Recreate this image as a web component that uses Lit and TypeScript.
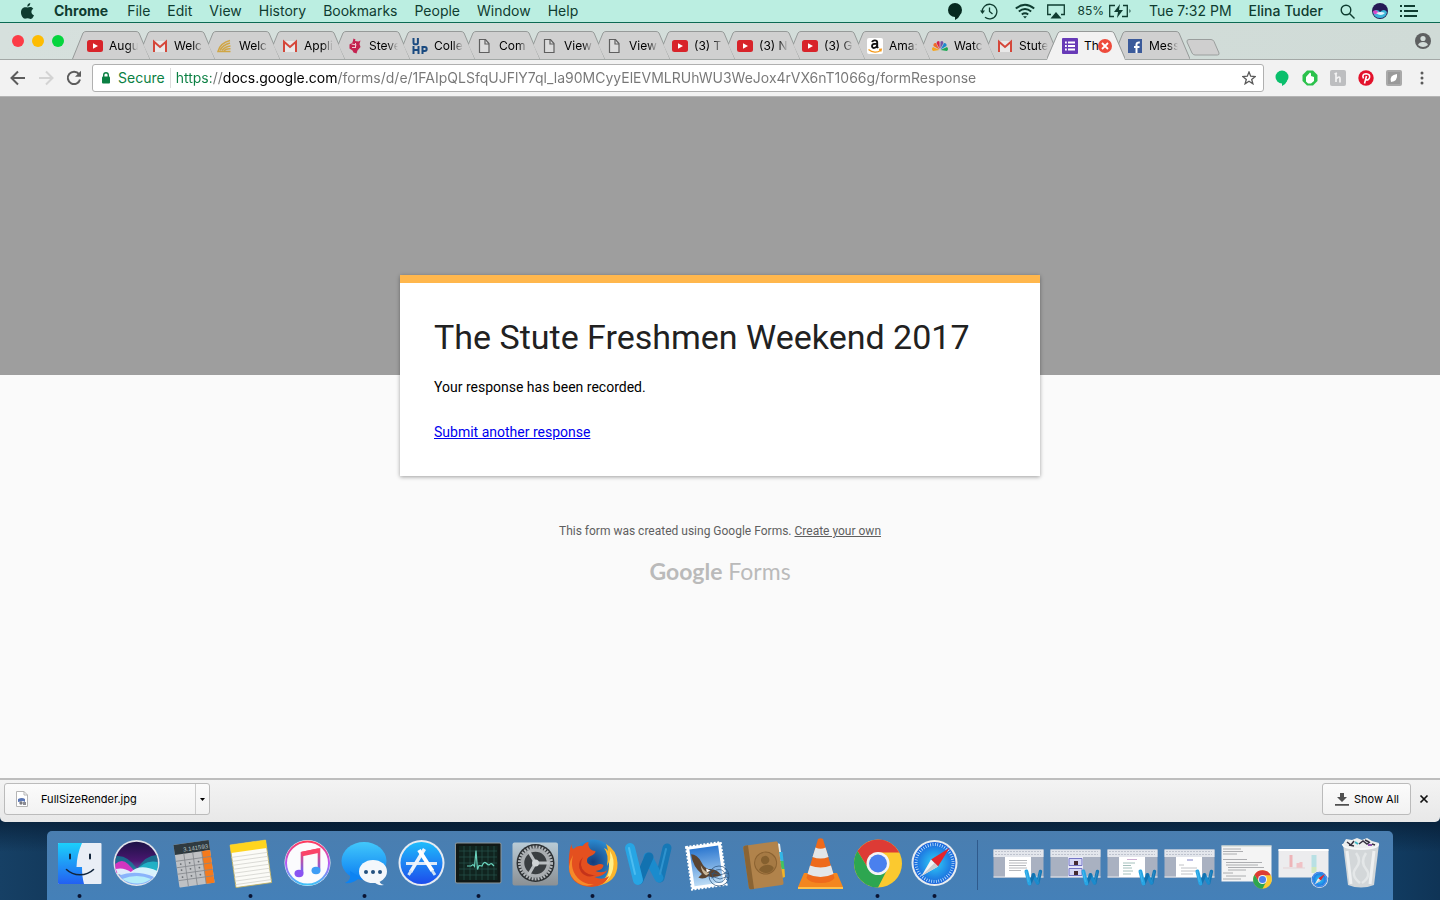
import { LitElement, html, css, svg, nothing } from "lit";
import { customElement } from "lit/decorators.js";
import { classMap } from "lit/directives/class-map.js";

const menus = ["File", "Edit", "View", "History", "Bookmarks", "People", "Window", "Help"];

const address =
  "https://docs.google.com/forms/d/e/1FAIpQLSfqUJFlY7ql_la90MCyyElEVMLRUhWU3WeJox4rVX6nT1066g/formResponse";

const favicons: Record<string, unknown> = {
  youtube: svg`<rect x="0" y="2" width="16" height="12" rx="2.5" fill="#d8232a"/><path d="M6 5.2v5.6L11 8z" fill="#fff"/>`,
  gmail: svg`<path d="M1.500 3h13v11h-13z" fill="#e8e8e8"/><path d="M2 14V3.800L8 9l6-5.200V14" fill="none" stroke="#d5473a" stroke-width="2"/>`,
  wing: svg`<path d="M13 2.500Q3 5 1 13.500h12.500" fill="none" stroke="#d0a646" stroke-width="1.500"/><path d="M13 5Q5.500 7 3 12.500M13.500 8Q8 8.500 5 12.500M13.500 10.800Q9 10.500 7 12.800" fill="none" stroke="#d0a646" stroke-width="1.600"/>`,
  stevens: svg`<g fill="#c42250"><path d="M6.500.5l2 1-.5 1.500 3.500.5 2-1-1 3.500 1 3-3 3.500-1 3-3-1-1-2-3-2 0-4 3-2z"/></g><path d="M4.500 6l5 1M5 9.500h4M8.500 5v5" stroke="#efc7d3" stroke-width="1"/>`,
  uhp: svg`<path d="M1.500 0v5q0 1.200 1.200 1.200h2q1.200 0 1.200-1.200V0M1.500 8v8M6.500 8v8M1.500 12h5M10.500 16V9h2.200a2 2 0 0 1 0 4h-2.200" fill="none" stroke="#1a4a80" stroke-width="2"/>`,
  page: svg`<path d="M2.500 1.500h6l3.500 4v9H2.500z" fill="#dcdcdc" stroke="#5f5f5f" stroke-width="1.200"/><path d="M8 1.500V6h4" fill="none" stroke="#5f5f5f" stroke-width="1.200"/>`,
  amazon: svg`<rect width="16" height="16" rx="2" fill="#fff"/><path d="M5.200 4.200C5.600 1.900 10.200 1.600 10.200 4.500v4c0 .8.500 1 .9 1.500M10 5.600C6.500 5.500 5 6.300 5 8.100c0 2.600 4.300 2.400 5.100-.4" fill="none" stroke="#111" stroke-width="1.900"/><path d="M1.500 11.500c4 3.300 9 3.200 12 .9M12 11.500l2.300-.2-.6 2.200" fill="none" stroke="#f59a1b" stroke-width="1.300"/>`,
  nbc: svg`<path d="M7.500 12L1 13q-2-2 0-4z" fill="#f6a51c"/><path d="M7.300 11.500L1.500 8Q1 4.500 4 5z" fill="#ef6a2a"/><path d="M7.700 11L4.500 5Q5.500 2 7.500 3.600z" fill="#d4234a"/><path d="M8.300 11L8.500 3.600Q11 2 11.500 5z" fill="#7354a5"/><path d="M8.700 11.500L12 5q3 0 2.500 3z" fill="#1d88cc"/><path d="M8.500 12L15 9q2 2 0 4z" fill="#1ca853"/>`,
  forms: svg`<rect width="16" height="16" rx="1" fill="#673ab7"/><path d="M3 4.500h1.800M3 8h1.800M3 11.500h1.800M6 4.500h7M6 8h7M6 11.500h7" stroke="#fff" stroke-width="1.800"/>`,
  facebook: svg`<rect x="1" y="1" width="14" height="14" fill="#3b5a9a"/><path d="M9.500 15V6.500q0-2.300 3.300-1.900M7 9h5.500" fill="none" stroke="#fff" stroke-width="2"/>`,
};

const tabs: { icon: string; label: string; active?: boolean }[] = [
  { icon: "youtube", label: "Augu" },
  { icon: "gmail", label: "Welc" },
  { icon: "wing", label: "Welc" },
  { icon: "gmail", label: "Appli" },
  { icon: "stevens", label: "Steve" },
  { icon: "uhp", label: "Colle" },
  { icon: "page", label: "Com" },
  { icon: "page", label: "View" },
  { icon: "page", label: "View" },
  { icon: "youtube", label: "(3) T" },
  { icon: "youtube", label: "(3) N" },
  { icon: "youtube", label: "(3) G" },
  { icon: "amazon", label: "Ama:" },
  { icon: "nbc", label: "Watc" },
  { icon: "gmail", label: "Stute" },
  { icon: "forms", label: "Th", active: true },
  { icon: "facebook", label: "Mess" },
];

const chromeMark = svg`
  <circle r="24" fill="#fbc92f"/>
  <path d="M0 0V-11H21.300A24 24 0 0 0-20.500-12.500L-9.500 5.500z" fill="#dd3b35"/>
  <path d="M-20.500-12.500L-9.500 5.500 0 11 9.500 5.500 0 24A24 24 0 0 1-20.500-12.500z" fill="#2da650"/>
  <circle r="11.500" fill="#f4f4f4"/><circle r="9" fill="#4a80ee"/>`;

const safariMark = svg`
  <circle r="23" fill="#e9edf0"/><circle r="21" fill="url(#safari)"/>
  <circle r="18.500" fill="none" stroke="#d5efff" stroke-width="3" stroke-dasharray=".7 1.720"/>
  <path d="M15-15L-3.500-3.500 3.500 3.500z" fill="#e4252c"/><path d="M-13 13L-3.500-3.500 3.500 3.500z" fill="#f3f3f3"/><path d="M-13 13L3.500 3.500 0 0z" fill="#c8ccd0"/>`;

const wordMark = svg`
  <g fill="none" stroke-linecap="round" stroke-linejoin="round">
    <path d="M46 17L39 47" stroke="#1678b6" stroke-width="9"/>
    <path d="M27 26L38 47" stroke="#1a8bcd" stroke-width="9"/>
    <path d="M28 26L18 49" stroke="#1272b0" stroke-width="9"/>
    <path d="M9 17L17 49" stroke="#27a5e4" stroke-width="10"/>
    <path d="M8 17L14 43" stroke="#4cbcf0" stroke-width="2"/>
    <path d="M45 18L39 43" stroke="#2f93ce" stroke-width="2"/>
  </g>`;

const apps: { name: string; running?: boolean; art: unknown }[] = [
  {
    name: "Finder", running: true,
    art: svg`<rect x="7" y="12" width="43.500" height="41" rx="1" fill="#e9eef6"/><path d="M8 12H31Q26 23 25.500 36H31Q31 46 33 53H8q-1 0-1-1V13q0-1 1-1z" fill="url(#finder)"/>
      <path d="M19 23.500v4M39 23.500v4" stroke="#12263d" stroke-width="2" stroke-linecap="round"/><path d="M15.500 38.500c7 7 20 7 27 0" fill="none" stroke="#12263d" stroke-width="1.600" stroke-linecap="round"/>`,
  },
  {
    name: "Siri",
    art: svg`<circle cx="28.500" cy="32" r="23" fill="#dfe3ea"/><circle cx="28.500" cy="32" r="21.300" fill="url(#siri)"/>
      <path d="M8.500 25Q20 24 29 38 38 24 48.500 24 51 32 48.500 40L9 40Q6 32 8.500 25z" fill="#0a8f9c" opacity=".7"/>
      <path d="M7.300 33Q14 27 20 33 25 38 28 42L8.500 42Q7 38 7.300 33z" fill="#e52fc4" opacity=".9"/>
      <path d="M26 42Q36 28 49.700 31 50 39 47.500 43z" fill="#22c5d6" opacity=".75"/>
      <path d="M7.800 38q8-2 15 3 9-9 26.500-1-1 4-3 6.500-12-5-23-3-8 2-13.500-.5z" fill="#dff6ff" opacity=".95"/>
      <path d="M11 44.500q17-6 35 1.500-5 5-9 6.300-9 2.500-17-.5-6-3-9-7.300z" fill="#8ab4fb"/><path d="M14 48q15-6 29 0-13 9-29 0z" fill="#b8f3fa" opacity=".9"/>`,
  },
  {
    name: "Calculator",
    art: svg`<g transform="translate(8.500 14) rotate(-8)"><rect width="35.500" height="43" rx="1" fill="#bfc1c4"/><rect width="35.500" height="10" fill="#2f3a40"/>
      <rect x="27" y="10" width="8.500" height="33" fill="#f57a1c"/><path d="M0 16.500h35.500M0 23h35.500M0 29.500h35.500M0 36h35.500M9 10v33M18 10v33M27 10v33" stroke="#84888c" stroke-width=".8"/>
      <g fill="#6c7074"><circle cx="4.500" cy="20" r=".9"/><circle cx="13.500" cy="20" r=".9"/><circle cx="22.500" cy="20" r=".9"/><circle cx="4.500" cy="26" r=".9"/><circle cx="13.500" cy="26" r=".9"/><circle cx="22.500" cy="26" r=".9"/><circle cx="4.500" cy="33" r=".9"/><circle cx="13.500" cy="33" r=".9"/><circle cx="22.500" cy="33" r=".9"/></g>
      <text x="34" y="8" text-anchor="end" font-size="6" fill="#b7c4c6">3.141593</text></g>`,
  },
  {
    name: "Notes", running: true,
    art: svg`<g transform="translate(8 14) rotate(-8)"><rect width="36" height="43" fill="#fbfbf7" stroke="#c5b25c" stroke-width=".8"/><rect width="36" height="8" fill="#ffd51e"/>
      <path d="M0 12.500h36M0 16.500h36M0 20.500h36M0 24.500h36M0 28.500h36M0 32.500h36M0 36.500h36M0 40h36" stroke="#d5d5d0" stroke-width=".8"/></g>`,
  },
  {
    name: "iTunes",
    art: svg`<circle cx="28.500" cy="32" r="23" fill="#f4f4f8"/><circle cx="28.500" cy="32" r="21.500" fill="#fbfbfd" stroke="url(#tunes)" stroke-width="2"/>
      <path d="M23 42V22l17-3.500v20" fill="none" stroke="url(#note)" stroke-width="2.600"/><path d="M23 23l17-3.500" stroke="#fb4468" stroke-width="4.500"/><ellipse cx="20" cy="42.500" rx="4.500" ry="3.700" fill="#8a53f2"/><ellipse cx="37" cy="39.500" rx="4.500" ry="3.700" fill="#3f9df5"/>`,
  },
  {
    name: "Messages", running: true,
    art: svg`<ellipse cx="28" cy="30" rx="22.500" ry="19" fill="url(#sky)"/><path d="M14 40q2 9-5 12 9 1 15-6z" fill="#0d83f2"/>
      <ellipse cx="37" cy="40.500" rx="14" ry="11.500" fill="#f4f7fb"/><path d="M43 48q0 5 5 6-7 1-11-4z" fill="#f4f7fb"/><circle cx="30" cy="41" r="2" fill="#24517f"/><circle cx="37" cy="41" r="2" fill="#24517f"/><circle cx="44" cy="41" r="2" fill="#24517f"/>`,
  },
  {
    name: "App Store",
    art: svg`<circle cx="28.500" cy="32" r="23" fill="#e6ebf2"/><circle cx="28.500" cy="32" r="21" fill="url(#store)"/>
      <path d="M13 32.500h31" stroke="#dfeaf8" stroke-width="3"/><path d="M31.500 18L17.500 41" stroke="#eef4fb" stroke-width="3.500"/><path d="M26 19l13.500 21" stroke="#fff" stroke-width="4"/><path d="M18.500 39.500l-3 4.500M39 39.500l3 4.500" stroke="#cfe2f5" stroke-width="3"/>`,
  },
  {
    name: "Activity Monitor", running: true,
    art: svg`<rect x="5" y="11.500" width="46.500" height="41" rx="2" fill="#8e9699"/><rect x="6" y="12.500" width="44.500" height="39" rx="1" fill="#101816"/><rect x="9" y="15" width="38.500" height="34" fill="#10241f"/>
      <path d="M9 20h38M9 26h38M9 32h38M9 38h38M9 44h38M14 15v34M20 15v34M26 15v34M32 15v34M38 15v34M44 15v34" stroke="#25544a" stroke-width=".7"/>
      <path d="M17 35h4l2-1.500 1.500 2 1.500-16 1.500 19 1.500-4 3 .5q2-5 4-3t3 2q2-2 3-1l2 2" fill="none" stroke="#69d3bd" stroke-width="1.200"/>`,
  },
  {
    name: "System Preferences",
    art: svg`<rect x="5.500" y="11.500" width="45.500" height="43" rx="2" fill="url(#metal)"/><circle cx="28.500" cy="32" r="19" fill="#2c3033"/><circle cx="28.500" cy="32" r="16" fill="#4a4f52" stroke="#b3b7ba" stroke-width="3" stroke-dasharray="1.800 1.200"/>
      <circle cx="28.500" cy="32" r="13" fill="#3a3e41" stroke="#a9adb0" stroke-width="3.500"/><path d="M28.500 32h14M28.500 32l-7-12M28.500 32l-7 12" stroke="#b9bdc0" stroke-width="3"/><circle cx="28.500" cy="32" r="3.500" fill="#d0d3d5"/>`,
  },
  {
    name: "Firefox", running: true,
    art: svg`<circle cx="29" cy="31" r="22.500" fill="url(#globe)"/>
      <path d="M42 13q11 6 11.500 19 .5 20-21.500 23 14-8 13-24l-2 4q2-12-3-18 3 1 4 3-.5-4-2-7z" fill="#fbb62c"/><path d="M46 20q5 8 3 18-2 9-8 13 5-9 4-18 2-6 1-13z" fill="#fff08a"/>
      <path d="M7.500 13q0 4 2 5 4-4 9-3 3-4 6-4-1 3 1 6 2 3 6 3 0 3-5 5-5 2-3 7 4 4 9 2 4-2 7 0 0 5-8 6 7 3 12-1-4 7-13 7 8 4 15-1-6 11-18 11Q7 55 5 38 4 22 7.500 13z" fill="#e4501f"/>
      <path d="M9 24Q5 40 16 49q6 5 14 4-8 4-16-1Q5 46 5 36q1-7 4-12z" fill="#f58a2a"/><path d="M19 26q-5 9 2 15 5 4 11 3-9 4-15-3-5-8 2-15z" fill="#c5331a"/>`,
  },
  { name: "Microsoft Word", running: true, art: wordMark },
  {
    name: "Mail",
    art: svg`<g transform="translate(8 16) rotate(-8)"><rect width="35" height="43" fill="#fff" stroke="#fff" stroke-width="2" stroke-dasharray="2 1.500"/><rect x="3" y="3" width="29" height="37" fill="url(#stamp)"/>
      <path d="M4 8q6 1 9 9 2 6 6 8 8 0 12 8-7 2-13-1-5 3-10 0l4-3Q4 21 4 8z" fill="#5a4330"/><path d="M12 20q3 8 8 9l-4 2q-4-3-4-11z" fill="#c9b698"/><path d="M17 24l4 3-4 1z" fill="#fff"/></g><circle cx="41" cy="45" r="10" fill="none" stroke="#2e557f" stroke-width="1" opacity=".75"/><circle cx="41" cy="45" r="6.500" fill="none" stroke="#2e557f" opacity=".7"/><path d="M33 43q3-2 6 0t6 0 6 0M33 47q3-2 6 0t6 0 6 0" fill="none" stroke="#2e557f" opacity=".7"/>`,
  },
  {
    name: "Contacts",
    art: svg`<path d="M42 12l3 1 4 32-4 2z" fill="#e8eef0"/><path d="M44 21l3.500 0 1 9-3 1z" fill="#33b7e6"/><path d="M45 30l3.500 0 1 8-3 1z" fill="#41c463"/><path d="M46 38l3.500 0 .5 8-3 1z" fill="#f2b327"/>
      <g transform="translate(8 15) rotate(-8)"><rect width="35" height="44" rx="2" fill="#b1834b"/><path d="M2 0h3v44H2q-2 0-2-2V2q0-2 2-2z" fill="#8a6434"/><circle cx="20" cy="20" r="11" fill="#a67a44" stroke="#8b6231"/><circle cx="20" cy="17" r="4.200" fill="#85602f"/><path d="M12.500 26q2-4 7.500-4t7.500 4q-3 4-7.500 4t-7.500-4z" fill="#85602f"/></g>`,
  },
  {
    name: "VLC",
    art: svg`<path d="M12 42h33l6 14v2H6v-2z" fill="#f3861f"/><path d="M6 56h45v2H6z" fill="#ffc04a"/><path d="M26 8q2.500-1.500 5 0l11.500 39q-3 5-14 5t-14-5z" fill="#ee6a1b"/>
      <path d="M23.500 16.500q5 2.500 10 0l3 9.500q-8 3-16 0zM18 34.500q10.500 4 21 0l2.500 8.500q-13 6-26 0z" fill="#e3e6e8"/>`,
  },
  { name: "Chrome", running: true, art: svg`<g transform="translate(29 32.500)">${chromeMark}</g>` },
  { name: "Safari", running: true, art: svg`<g transform="translate(28.500 32)">${safariMark}</g>` },
];

const wordBadge = svg`<g transform="translate(33 34) scale(.38)">${wordMark}</g>`;
const wordWindow = svg`<rect x="3.500" y="18.500" width="50" height="28" fill="#a9b1c1"/><rect x="3.500" y="18.500" width="50" height="7.500" fill="#e3e6ec"/><path d="M5 20.500h46M5 23.500h46" stroke="#b5bac6" stroke-dasharray="2 1" stroke-width=".8"/><path d="M3.500 46h50" stroke="#e8e8ec"/>`;
const windows: { name: string; art: unknown }[] = [
  { name: "Document one", art: svg`${wordWindow}<rect x="15" y="26" width="26" height="20" fill="#fff"/><path d="M19 29.500h18M19 32h18M19 34.500h17M19 37h18M19 39.500h12" stroke="#a5a7ac" stroke-width=".8"/>${wordBadge}` },
  { name: "Document two", art: svg`${wordWindow}<rect x="21" y="26" width="15" height="20" fill="#e6e8f8"/><path d="M22 27.500h13v7H22zM22 37.500h13v7H22z" fill="#d5d7f4" stroke="#7476c4"/><path d="M27 30h4v4h-4zM27 40h4v4h-4z" fill="#452b32"/>${wordBadge}` },
  { name: "Document three", art: svg`${wordWindow}<rect x="15" y="26" width="26" height="20" fill="#fff"/><path d="M23 28.500h10" stroke="#c09ac8" stroke-width=".8"/><path d="M19 32h12M19 34.500h8M19 37h9M19 40h10M19 43h8" stroke="#8db0ab" stroke-width=".8"/>${wordBadge}` },
  { name: "Document four", art: svg`${wordWindow}<rect x="15" y="26" width="26" height="20" fill="#fff"/><path d="M26 29h6" stroke="#a9aad8" stroke-width="1.500"/><path d="M18 34h5M20 37h16M20 40h17M20 43h12" stroke="#b0b2b8" stroke-width=".8"/>${wordBadge}` },
  { name: "Notes page", art: svg`<rect x="3.500" y="14.500" width="50" height="36" fill="#f4f4f4"/><path d="M3.500 15h50" stroke="#c6cfc6"/><path d="M5 18h18M5 20.500h20M5 23h14M5 28.500h24M8 31.500h36M8 34h32M10 36.500h36M10 39h18M5 42h10M8 45h20M5 48h18" stroke="#9a9c9f" stroke-width=".8"/><g transform="translate(44.500 48.500) scale(.39)">${chromeMark}</g>` },
  { name: "Chart page", art: svg`<rect x="3.500" y="18.500" width="50" height="28" fill="#ececee"/><path d="M3.500 19h50" stroke="#fff" stroke-width="2"/><path d="M16 24v12" stroke="#eeb4b8" stroke-width="3"/><path d="M23 32v5M26 31v6" stroke="#f0c2c6" stroke-width="3"/><path d="M8 37h22" stroke="#e5d3d5"/><path d="M39 24v12" stroke="#b8e0e4" stroke-width="5"/><path d="M39 36v6" stroke="#cfe8bd" stroke-width="5"/><g transform="translate(44.500 48.500) scale(.37)">${safariMark}</g>` },
];

const trashArt = svg`
  <path d="M11 13h36l-5 41q-13 5-26 0z" fill="#d3d7d9"/><path d="M15 20l4 33M42 20l-4 33" stroke="#eef0f1" fill="none" stroke-width="3"/><path d="M24 22q6 8 0 15t4 15M34 22q-6 9 0 16t-4 14" stroke="#e4e7e8" fill="none" stroke-width="2.500"/>
  <path d="M11 13l3-5 6 1 5-2 5 2 5-2 5 3 7 2-1 4-17 3-17-3z" fill="#eceeee"/><path d="M15 11l4 3 3-4M27 13l4-3 4 3 3-2M33 9l4 2M17 14l5 1M40 13l3 1" fill="none" stroke="#353240" stroke-width="1.500"/><path d="M23 11l3 2" stroke="#3fb9c6" stroke-width="2"/><path d="M36 14l4 0" stroke="#8a4fa8" stroke-width="2"/>
  <path d="M10.500 13q1 5 18 5t18-5" fill="none" stroke="#f6f7f8" stroke-width="1.500"/>`;

@customElement("mac-menu-bar")
export class MacMenuBar extends LitElement {
  static styles = css`
    :host { display: block; }
    .bar { display: flex; align-items: center; justify-content: space-between; height: 22px; padding: 0 22px 0 20px; background: #bbeee1; border-bottom: 1px solid #0c6a53; color: #0f3c30; font: 14px/22px Inter, sans-serif; }
    .side { display: flex; align-items: center; gap: 17px; }
    .tight { display: flex; align-items: center; gap: 12px; }
    .side svg { display: block; }
    .item { border: 0; padding: 0; background: none; color: inherit; font: inherit; }
    .app { font-weight: 700; margin-right: 2px; }
    .logo { margin-right: 2px; }
    .battery { display: flex; align-items: center; gap: 4px; font-size: 12px; }
    .text { font-weight: 500; }
  `;
  render() {
    return html`
      <header class="bar">
        <nav class="side">
          <svg class="logo" width="15" height="18" viewBox="0 0 15 18"><path d="M10.300 1q0 3-3 3.700Q7 1.900 10.300 1zM7.500 5.600C9 5 11.500 4.300 13.300 6.700 10.500 8.500 11 12 14 13.200 12.500 17 11 17.300 9 16.600q-1.500-.5-3 0C3.500 17.500 1 14 1 10.500 1 6 4.500 4.300 7.500 5.600z" fill="#0f3c30"/></svg>
          <button class="item app">Chrome</button>
          ${menus.map((m) => html`<button class="item">${m}</button>`)}
        </nav>
        <div class="side">
          <svg width="16" height="18" viewBox="0 0 16 18"><circle cx="8" cy="8" r="7" fill="#06291f"/><path d="M8 14v4q4-2 5-5z" fill="#06291f"/></svg>
          <svg width="18" height="17" viewBox="0 0 18 17" fill="none" stroke="#0f3c30" stroke-width="1.300"><path d="M2.300 9.500A7.300 7.300 0 1 1 5 14.300"/><path d="M9.500 4.500v4l3 2.500"/><path d="M0 7.500h5L2.500 11z" fill="#0f3c30" stroke="none"/></svg>
          <div class="tight">
            <svg width="20" height="16" viewBox="0 0 20 16" fill="none" stroke="#0f3c30" stroke-width="1.900"><path d="M.8 5.500Q10-2 19.200 5.500M3.800 8.500q6.200-5 12.400 0M6.800 11.500q3.200-2.500 6.400 0"/><path d="M8 13.300h4L10 15.500z" fill="#0f3c30" stroke="none"/></svg>
            <svg width="18" height="15" viewBox="0 0 18 15"><path d="M4 10.500H.7V1h16.600v9.500H14" fill="none" stroke="#0f3c30" stroke-width="1.300"/><path d="M3.500 14.500L9 8l5.500 6.500z" fill="#0f3c30"/></svg>
            <span class="battery">85%
              <svg width="24" height="14" viewBox="0 0 24 14"><path d="M7 1.500H1.700v11H6M15 1.500h4.300v11H14" fill="none" stroke="#0f3c30" stroke-width="1.300"/><path d="M12 0L6 8h4l-1 6 6-8h-4z" fill="#0f3c30"/><path d="M21.500 5q2 2 0 4z" fill="#0f3c30"/></svg>
            </span>
          </div>
          <span class="item">Tue 7:32 PM</span>
          <span class="item text">Elina Tuder</span>
          <svg width="15" height="15" viewBox="0 0 15 15" fill="none" stroke="#0f3c30" stroke-width="1.400"><circle cx="6" cy="6" r="4.800"/><path d="M9.500 9.500l5 5"/></svg>
          <div class="tight">
            <svg width="16" height="16" viewBox="0 0 16 16"><circle cx="8" cy="8" r="8" fill="#251a56"/><path d="M1 9q4-4 7 0 4-4 7 0-1 6-7 6T1 9z" fill="#3bb6d8"/><path d="M1 8q4-2 6 2-3 2-5 1z" fill="#d846c8"/><path d="M4 10q5-2 9 0-4 4-9 0z" fill="#e3f5ff"/></svg>
            <svg width="18" height="12" viewBox="0 0 18 12" stroke="#0f3c30" stroke-width="1.800"><path d="M0 1h2M0 6h2M0 11h2M4 1h11M4 6h14M4 11h13"/></svg>
          </div>
        </div>
      </header>`;
  }
}

@customElement("browser-tabs")
export class BrowserTabs extends LitElement {
  static styles = css`
    :host { display: block; }
    .strip { display: flex; align-items: flex-end; height: 36px; padding: 0 9px 0 12px; background: linear-gradient(90deg, #d6e0dd, #d0dbd7); border-bottom: 1px solid #a3a8a6; font: 12px/16px Inter, sans-serif; color: #000; }
    .lights { display: flex; gap: 8px; align-self: center; margin-right: 8px; }
    .light { width: 12px; height: 12px; border: 0; padding: 0; border-radius: 50%; background: #fc3c47; }
    .light.min { background: #fdbc02; }
    .light.max { background: #05d53e; }
    .tabs { display: flex; }
    .tab { display: grid; width: 78px; height: 28px; margin-right: -13px; flex: none; padding: 0; border: 0; background: none; font: inherit; color: inherit; text-align: left; }
    .tab.active { z-index: 1; height: 29px; margin-bottom: -1px; }
    .shape, .content { grid-area: 1 / 1; }
    .content { display: flex; align-items: center; gap: 6px; padding: 1px 12px 0 15px; min-width: 0; }
    .content svg { flex: none; }
    .label { flex: 1; min-width: 0; white-space: nowrap; -webkit-mask-image: linear-gradient(90deg, #000 65%, transparent); mask-image: linear-gradient(90deg, #000 65%, transparent); }
    .active .content { padding-right: 13px; }
    .active .label { margin-right: -6px; -webkit-mask-image: none; mask-image: none; }
    .close { z-index: 1; }
    .new { align-self: flex-end; margin: 0 0 3px 9px; padding: 0; border: 0; background: none; line-height: 0; }
    .profile { align-self: center; margin-left: auto; }
  `;
  render() {
    return html`
      <div class="strip">
        <div class="lights">
          <button class="light" aria-label="Close"></button><button class="light min" aria-label="Minimise"></button><button class="light max" aria-label="Zoom"></button>
        </div>
        <div class="tabs" role="tablist">
          ${tabs.map((t, i) => html`
            <button role="tab" aria-selected=${t.active ? "true" : "false"} class=${classMap({ tab: true, active: !!t.active })}>
              <svg class="shape" width="78" height="29" viewBox="0 0 78 29">
                ${t.active
                  ? svg`<path d="M0 29L11 2Q12 .5 14 .5H64Q66 .5 67 2L78 29z" fill="#f2f2f2"/><path d="M-.5 28.500L11 2Q12 .5 14 .5H64Q66 .5 67 2L78.500 28.500" fill="none" stroke="#969a99"/>`
                  : i === 0
                    ? svg`<path d="M.5 28L11 2Q12 .5 14 .5H64Q66 .5 67 2L78 28" fill="#d0d0d0" stroke="#969a99"/>`
                    : svg`<path d="M13 28L6.500 14 11 2Q12 .5 14 .5H64Q66 .5 67 2L78 28z" fill="#d0d0d0"/><path d="M6.500 13L11 2Q12 .5 14 .5H64Q66 .5 67 2L78 28" fill="none" stroke="#969a99"/>`}
              </svg>
              <span class="content">
                <svg width="16" height="16" viewBox="0 0 16 16">${favicons[t.icon]}</svg>
                <span class="label">${t.label}</span>
                ${t.active ? html`<svg class="close" width="14" height="14" viewBox="0 0 14 14"><circle cx="7" cy="7" r="7" fill="#ee4b3c"/><path d="M4 4l6 6M10 4l-6 6" stroke="#fff" stroke-width="1.800"/></svg>` : nothing}
              </span>
            </button>`)}
        </div>
        <button class="new" aria-label="New tab"><svg width="34" height="17" viewBox="0 0 34 17"><path d="M3 .5H25Q27 .5 28 2.500L33 14Q33.500 16 31.500 16H9Q7 16 6 14L1 3Q.5.5 3 .5z" fill="#cfcfcf" stroke="#9a9e9d"/></svg></button>
        <svg class="profile" width="16" height="16" viewBox="0 0 16 16"><circle cx="8" cy="8" r="8" fill="#5e6061"/><circle cx="8" cy="5.500" r="2.600" fill="#d2dcd9"/><path d="M3 12q1-3 5-3t5 3q-5 4-10 0z" fill="#d2dcd9"/></svg>
      </div>`;
  }
}

@customElement("browser-toolbar")
export class BrowserToolbar extends LitElement {
  static styles = css`
    :host { display: block; }
    .bar { display: flex; align-items: center; height: 36px; padding: 0 10px; background: #f2f2f2; border-bottom: 1px solid #b4b4b4; font: 14px/20px Inter, sans-serif; }
    .nav { display: flex; gap: 12px; margin-right: 10px; }
    .icon { display: grid; place-items: center; width: 16px; height: 16px; padding: 0; border: 0; background: none; }
    .box { display: flex; flex: 1; align-items: center; height: 26px; padding: 0 7px; border: 1px solid #b0b0b0; border-radius: 3px; background: #fff; }
    .secure { color: #0b8043; margin: 0 5px 0 6px; }
    .field { flex: 1; min-width: 0; padding: 0 0 0 5px; border: 0; border-left: 1px solid #dcdcdc; outline: 0; font: inherit; color: transparent; -webkit-background-clip: text; background-clip: text; background-image: linear-gradient(90deg, #0b8043 40px, #767676 40px, #767676 52px, #000 52px, #000 167px, #767676 167px); }
    .extensions { display: flex; gap: 12px; margin-left: 10px; }
    svg { display: block; }
  `;
  render() {
    return html`
      <div class="bar">
        <div class="nav">
          <button class="icon" aria-label="Back"><svg width="16" height="16" viewBox="0 0 16 16" fill="none" stroke="#5c5c5c" stroke-width="2"><path d="M15 8H2M8 1.500L1.500 8 8 14.500"/></svg></button>
          <button class="icon" aria-label="Forward"><svg width="16" height="16" viewBox="0 0 16 16" fill="none" stroke="#d3d3d3" stroke-width="2"><path d="M1 8h13M8 1.500L14.500 8 8 14.500"/></svg></button>
          <button class="icon" aria-label="Reload"><svg width="16" height="16" viewBox="0 0 16 16"><path d="M13 4.200A6.200 6.200 0 1 0 14 9.500" fill="none" stroke="#5c5c5c" stroke-width="2"/><path d="M15 .8v6H9z" fill="#5c5c5c"/></svg></button>
        </div>
        <div class="box">
          <svg width="12" height="14" viewBox="0 0 12 14"><rect x="2" y="5.500" width="8" height="7" rx="1" fill="#0b8043"/><path d="M3.700 6V4a2.300 2.300 0 0 1 4.600 0v2" fill="none" stroke="#0b8043" stroke-width="1.400"/></svg>
          <span class="secure">Secure</span>
          <input class="field" aria-label="Address" .value=${address} />
          <svg width="14" height="14" viewBox="0 0 14 14"><path d="M7 1l1.700 4.200 4.500.3-3.500 2.900 1.200 4.400L7 10.300l-3.900 2.500 1.200-4.400L.8 5.500l4.500-.3z" fill="none" stroke="#5a5a5a" stroke-width="1.300"/></svg>
        </div>
        <div class="extensions">
          <button class="icon" aria-label="Hangouts"><svg width="16" height="16" viewBox="0 0 16 16"><circle cx="8" cy="7" r="6.500" fill="#0abf6c"/><path d="M8 12v4q4-2 5-5z" fill="#0abf6c"/></svg></button>
          <button class="icon" aria-label="Like"><svg width="16" height="16" viewBox="0 0 16 16"><path d="M5 .5h6L15.500 5v6L11 15.500H5L.5 11V5z" fill="#2bc24c"/><path d="M4 7l4-4.500 1 1V6l3 1v4l-3 2.500H6L4 11.500z" fill="#fff"/></svg></button>
          <button class="icon" aria-label="Honey"><svg width="16" height="16" viewBox="0 0 16 16"><rect width="16" height="16" rx="2" fill="#bdbec0"/><path d="M6 3v9M6 9q4-4 4 0v3.500M4.500 4L7 3" fill="none" stroke="#f3f3f3" stroke-width="1.700"/></svg></button>
          <button class="icon" aria-label="Pinterest"><svg width="16" height="16" viewBox="0 0 16 16"><circle cx="8" cy="8" r="7.700" fill="#e3122b"/><path d="M6.500 13.500L8.500 6M5.500 8.500Q3.500 4 8 3.700q4.500.3 3.500 4Q10.300 11 7.800 9.500" fill="none" stroke="#fff" stroke-width="1.600"/></svg></button>
          <button class="icon" aria-label="Extension"><svg width="16" height="16" viewBox="0 0 16 16"><rect width="16" height="16" rx="2" fill="#a9a9a9"/><rect x="2" y="2" width="12" height="12" fill="#999"/><path d="M5 12Q3 5 11 4q1 7-6 8z" fill="#fff"/></svg></button>
          <button class="icon" aria-label="Menu"><svg width="16" height="16" viewBox="0 0 16 16" fill="#5a5a5a"><circle cx="8" cy="3" r="1.500"/><circle cx="8" cy="8" r="1.500"/><circle cx="8" cy="13" r="1.500"/></svg></button>
        </div>
      </div>`;
  }
}

@customElement("form-confirmation")
export class FormConfirmation extends LitElement {
  static styles = css`
    :host { display: flex; flex: 1; }
    .page { display: flex; flex: 1; flex-direction: column; align-items: center; padding: 178px 20px 0; background: linear-gradient(#9e9e9e 278px, #fafafa 278px); font: 14px/20px Roboto, sans-serif; color: #212121; }
    .card { box-sizing: border-box; width: 100%; max-width: 640px; padding: 32px 34px 34px; border-top: 8px solid #ffb74d; background: #fff; box-shadow: 0 1px 4px rgba(0, 0, 0, 0.37); }
    .title { margin: 0 0 17px; font-size: 34px; line-height: 45px; font-weight: 400; }
    .message { margin: 0 0 25px; color: #000; }
    .again { color: #00e; }
    .link { margin: 0; }
    .credit { margin: 45px 0 16px; font-size: 12px; color: #5f5f5f; }
    .credit a { color: inherit; }
    .brand { font: 23px/28px Lato, sans-serif; color: #bababa; text-decoration: none; }
    .brand b { font-weight: 700; }
  `;
  render() {
    return html`
      <main class="page">
        <section class="card">
          <h1 class="title">The Stute Freshmen Weekend 2017</h1>
          <p class="message">Your response has been recorded.</p>
          <p class="link"><a class="again" href="#">Submit another response</a></p>
        </section>
        <p class="credit">This form was created using Google Forms. <a href="#">Create your own</a></p>
        <a class="brand" href="#"><b>Google</b> Forms</a>
      </main>`;
  }
}

@customElement("download-shelf")
export class DownloadShelf extends LitElement {
  static styles = css`
    :host { display: block; background: #0a2743; }
    .shelf { display: flex; align-items: center; justify-content: space-between; height: 42px; padding: 0 11px 0 4px; border-top: 2px solid #bdbdbd; border-radius: 0 0 5px 5px; background: linear-gradient(#f3f3f3, #e8e8e8); font: 11px/16px Inter, sans-serif; }
    .group { display: flex; align-items: center; gap: 8px; padding-bottom: 4px; }
    .file, .all { display: flex; align-items: center; box-sizing: border-box; height: 32px; border: 1px solid #bbb; border-radius: 3px; background: linear-gradient(#fbfbfb, #f2f2f2); }
    .file { width: 206px; }
    .open { display: flex; flex: 1; align-items: center; gap: 12px; height: 100%; padding: 0 10px; border: 0; background: none; font: inherit; color: #000; }
    .more { width: 14px; height: 100%; padding: 0; border: 0; border-left: 1px solid #ccc; background: none; }
    .all { gap: 5px; padding: 0 11px 0 12px; font: inherit; color: #000; }
    .close { padding: 0; border: 0; background: none; }
    svg { display: block; margin: 0 auto; }
    .open svg { margin: 0; }
  `;
  render() {
    return html`
      <footer class="shelf">
        <div class="group">
          <div class="file">
            <button class="open"><svg width="14" height="16" viewBox="0 0 14 16"><path d="M1.500.5H9l3.500 3.500v11.500h-11z" fill="#fff" stroke="#b5b5b5"/><path d="M9 .5V4h3.500" fill="none" stroke="#b5b5b5"/><path d="M3 8q4-2 7 0v3l-2-1-5 1z" fill="#5a76b5"/><circle cx="6" cy="12" r="1.700" fill="#7a7a80"/><path d="M8 11h3v3H8z" fill="#8b8b93"/></svg>FullSizeRender.jpg</button>
            <button class="more" aria-label="Download options"><svg width="5" height="3" viewBox="0 0 5 3"><path d="M0 0h5L2.500 3z"/></svg></button>
          </div>
        </div>
        <div class="group">
          <button class="all"><svg width="14" height="13" viewBox="0 0 14 13" fill="#505050"><path d="M5 0h4v4h3L7 9 2 4h3zM0 11h14v1.700H0z"/></svg>Show All</button>
          <button class="close" aria-label="Close"><svg width="10" height="10" viewBox="0 0 10 10" stroke="#111" stroke-width="1.700"><path d="M1.500 1.500l7 7M8.500 1.500l-7 7"/></svg></button>
        </div>
      </footer>`;
  }
}

@customElement("mac-dock")
export class MacDock extends LitElement {
  static styles = css`
    :host { display: block; }
    .desk { display: flex; justify-content: center; padding-top: 9px; background: linear-gradient(#04172c99, #04172c00 30px), linear-gradient(90deg, #164065, #0a2743 15%, #0c2c4b 60%, #123f66 95%, #0f3456); }
    .dock { display: flex; height: 69px; padding: 0 4px; border-radius: 5px 5px 0 0; background: linear-gradient(#4a7eb0, #4480b8); }
    .tile { width: 57px; height: 69px; padding: 0; border: 0; background: none; }
    .rule { width: 1px; height: 50px; margin: 9px 12px 0 14px; background: #2f5a8c; }
    svg { display: block; overflow: visible; font-family: "Liberation Sans", sans-serif; }
  `;
  tile(name: string, art: unknown, running = false) {
    return html`<button class="tile" aria-label=${name}>
      <svg width="57" height="69" viewBox="0 0 57 69">
        <defs>
          <linearGradient id="finder" x2="0" y2="1"><stop stop-color="#1bd0fb"/><stop offset="1" stop-color="#2360f2"/></linearGradient>
          <linearGradient id="siri" x2="0" y2="1"><stop stop-color="#1c1245"/><stop offset=".45" stop-color="#4a1770"/><stop offset="1" stop-color="#7fa8f2"/></linearGradient>
          <linearGradient id="tunes" x2="0" y2="1"><stop stop-color="#ff3b5c"/><stop offset=".5" stop-color="#b659f4"/><stop offset="1" stop-color="#3fc2f8"/></linearGradient>
          <linearGradient id="note" x2="0" y2="1"><stop stop-color="#fb4468"/><stop offset="1" stop-color="#6c64f5"/></linearGradient>
          <linearGradient id="sky" x2="0" y2="1"><stop stop-color="#42c8fb"/><stop offset="1" stop-color="#0b7df2"/></linearGradient>
          <linearGradient id="store" x2="0" y2="1"><stop stop-color="#1fbcfb"/><stop offset="1" stop-color="#1c4cec"/></linearGradient>
          <linearGradient id="metal" x2="0" y2="1"><stop stop-color="#b9cbd6"/><stop offset="1" stop-color="#8b9094"/></linearGradient>
          <radialGradient id="globe"><stop stop-color="#173b78"/><stop offset="1" stop-color="#2a8ad0"/></radialGradient>
          <linearGradient id="stamp" x2="0" y2="1"><stop stop-color="#2d78d0"/><stop offset="1" stop-color="#bcdcf5"/></linearGradient>
          <radialGradient id="safari"><stop stop-color="#2fd0f8"/><stop offset="1" stop-color="#1a64dc"/></radialGradient>
        </defs>
        ${art}${running ? svg`<circle cx="28.500" cy="65" r="2" fill="#0a1433"/>` : nothing}
      </svg>
    </button>`;
  }
  render() {
    return html`
      <div class="desk">
        <nav class="dock" aria-label="Dock">
          ${apps.map((a) => this.tile(a.name, a.art, a.running))}
          <span class="rule"></span>
          ${windows.map((w) => this.tile(w.name, w.art))}
          ${this.tile("Trash", trashArt)}
        </nav>
      </div>`;
  }
}

@customElement("app-root")
export class AppRoot extends LitElement {
  static styles = css`
    :host { display: flex; flex-direction: column; min-height: 100vh; overflow: hidden; }
  `;
  render() {
    return html`
      <mac-menu-bar></mac-menu-bar>
      <browser-tabs></browser-tabs>
      <browser-toolbar></browser-toolbar>
      <form-confirmation></form-confirmation>
      <download-shelf></download-shelf>
      <mac-dock></mac-dock>`;
  }
}
